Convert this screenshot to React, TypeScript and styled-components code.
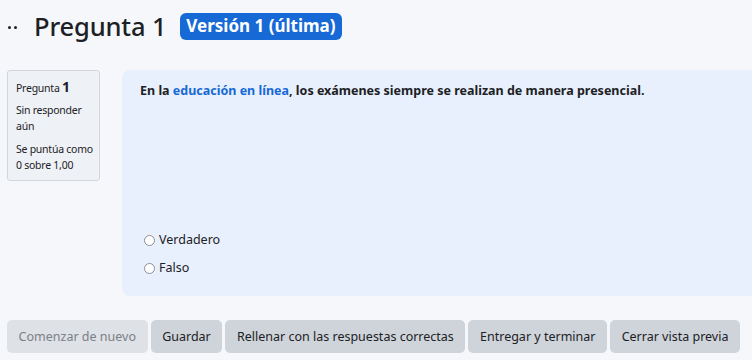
import React from "react";
import styled, { createGlobalStyle } from "styled-components";

const GlobalStyle = createGlobalStyle`
    html, body {
        margin: 0;
        padding: 0;
        background: #f5f7fb;
        font-family: "Noto Sans", "Open Sans", sans-serif;
        color: #1d2125;
        overflow: hidden;
    }
`;

const Page = styled.div`
    width: 752px;
    height: 360px;
    overflow: hidden;
    display: flex;
    flex-direction: column;
`;

const Header = styled.div`
    display: flex;
    align-items: center;
    height: 52px;
    padding-left: 8px;
`;

const Dots = styled.span`
    display: flex;
    gap: 3px;
    margin-right: 17px;
    margin-top: 2px;

    &::before,
    &::after {
        content: "";
        width: 3px;
        height: 3px;
        border-radius: 50%;
        background: #1d2125;
    }
`;

const Title = styled.h2`
    margin: 0;
    font-size: 25.5px;
    font-weight: 500;
    letter-spacing: -0.15px;
`;

const Badge = styled.span`
    margin-left: 14px;
    background: #1769d6;
    color: #fff;
    font-weight: 700;
    font-size: 17px;
    padding: 3px 6px 4px;
    border-radius: 6px;
    line-height: 20px;
`;

const Body = styled.div`
    display: flex;
    align-items: flex-start;
    margin-top: 18px;
    padding-left: 7px;
`;

const Info = styled.div`
    width: 93px;
    box-sizing: border-box;
    border: 1px solid #d2d6dc;
    border-radius: 3px;
    background: #eef1f6;
    padding: 8px 4px 7px 8px;
    font-size: 10.5px;
    letter-spacing: -0.25px;
    line-height: 16px;
    margin-right: 22px;
`;

const InfoTitle = styled.div`
    margin-bottom: 6px;

    b {
        font-size: 14px;
        font-weight: 700;
    }
`;

const InfoLine = styled.div`
    & + & {
        margin-top: 7px;
    }
`;

const Content = styled.div`
    flex: 1;
    height: 226px;
    background: #e7f0fc;
    border-radius: 8px 0 0 8px;
    padding: 12px 18px;
    box-sizing: border-box;
    display: flex;
    flex-direction: column;
`;

const QuestionText = styled.p`
    margin: 0;
    font-size: 12.5px;
    font-weight: 700;
    line-height: 18px;

    a {
        color: #1769d6;
        text-decoration: none;
    }
`;

const Answers = styled.div`
    margin-top: auto;
    margin-bottom: 7px;
    padding-left: 4px;
    display: flex;
    flex-direction: column;
    gap: 10px;
`;

const Option = styled.label`
    display: flex;
    align-items: center;
    font-size: 12.5px;
    line-height: 18px;
`;

const Radio = styled.span`
    width: 11px;
    height: 11px;
    border: 1px solid #8a8f96;
    border-radius: 50%;
    background: #fff;
    box-sizing: border-box;
    margin-right: 4px;
`;

const Buttons = styled.div`
    display: flex;
    gap: 3px;
    margin-top: 24px;
    padding-left: 7px;
`;

const Button = styled.button<{ disabled?: boolean }>`
    height: 33px;
    padding: 0 11.6px;
    border: none;
    border-radius: 5px;
    background: ${({ disabled }) => (disabled ? "#dee1e5" : "#ced4da")};
    color: ${({ disabled }) => (disabled ? "#7b8087" : "#1d2125")};
    font-family: inherit;
    font-size: 12.5px;
    white-space: nowrap;
`;

const buttons = [
    "Guardar",
    "Rellenar con las respuestas correctas",
    "Entregar y terminar",
    "Cerrar vista previa",
];

export default function App() {
    return (
        <Page>
            <GlobalStyle />
            <Header>
                <Dots />
                <Title>Pregunta 1</Title>
                <Badge>Versión 1 (última)</Badge>
            </Header>
            <Body>
                <Info>
                    <InfoTitle>
                        Pregunta <b>1</b>
                    </InfoTitle>
                    <InfoLine>Sin responder aún</InfoLine>
                    <InfoLine>Se puntúa como 0 sobre 1,00</InfoLine>
                </Info>
                <Content>
                    <QuestionText>
                        En la <a href="#">educación en línea</a>, los
                        exámenes siempre se realizan de manera presencial.
                    </QuestionText>
                    <Answers>
                        <Option>
                            <Radio />
                            Verdadero
                        </Option>
                        <Option>
                            <Radio />
                            Falso
                        </Option>
                    </Answers>
                </Content>
            </Body>
            <Buttons>
                <Button disabled>Comenzar de nuevo</Button>
                {buttons.map((b) => (
                    <Button key={b}>{b}</Button>
                ))}
            </Buttons>
        </Page>
    );
}
